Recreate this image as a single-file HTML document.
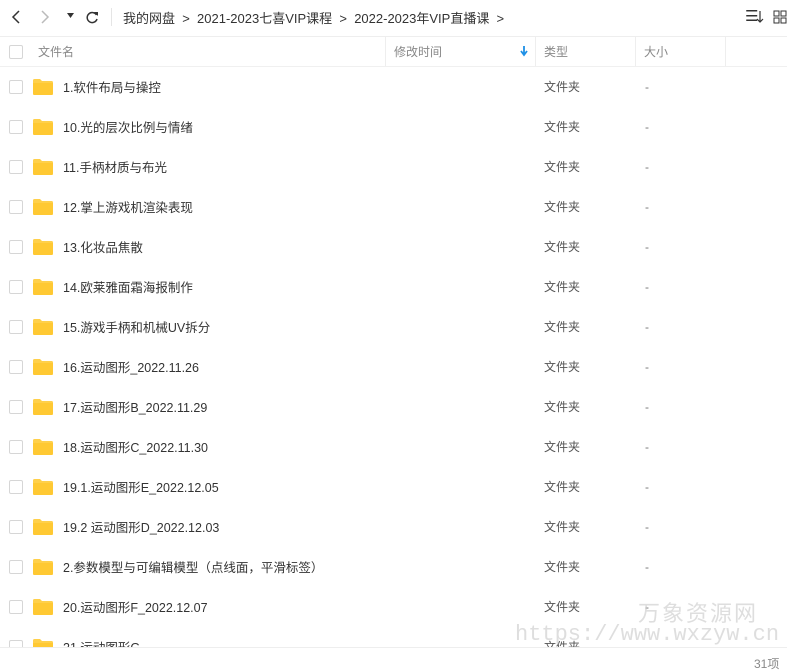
<!DOCTYPE html><html><head><meta charset="utf-8"><style>
body{margin:0;width:787px;height:671px;overflow:hidden;background:#fff;font-family:"Liberation Sans","Noto Sans CJK SC",sans-serif;font-size:12px;color:#333;position:relative}
.a{position:absolute;white-space:nowrap}
.cb{position:absolute;left:9px;width:12px;height:12px;border:1px solid #d6d6d6;border-radius:2px;background:#fff}
.row{position:absolute;left:0;width:787px;height:40px}
.fd{position:absolute;left:33px;top:12px;width:20px;height:16px}
.nm{position:absolute;left:63px;top:10px;font-size:12.5px}
.ty{position:absolute;left:544px;top:11px;color:#555}
.sz{position:absolute;left:645px;top:13px;color:#777}
.hd{color:#888}
</style></head><body>
<svg class="a" style="left:10px;top:9px" width="14" height="16"><path d="M9 2L3 8l6 6" stroke="#333" stroke-width="1.5" fill="none"/></svg>
<svg class="a" style="left:38px;top:9px" width="14" height="16"><path d="M4 2l6 6-6 6" stroke="#bbb" stroke-width="1.5" fill="none"/></svg>
<svg class="a" style="left:67px;top:13px" width="8" height="6"><path d="M0 0h7L3.5 5z" fill="#333"/></svg>
<svg class="a" style="left:84px;top:9px" width="16" height="16"><path d="M12.5 6A5 5 0 1 0 13 10" stroke="#333" stroke-width="1.5" fill="none"/><path d="M10 3l4 0 0 4z" fill="#333"/></svg>
<div class="a" style="left:111px;top:8px;width:1px;height:18px;background:#e5e5e5"></div>
<div class="a" style="left:123px;top:8px;font-size:13px;color:#333">我的网盘 &nbsp;&gt;&nbsp; 2021-2023七喜VIP课程 &nbsp;&gt;&nbsp; 2022-2023年VIP直播课 &nbsp;&gt;</div>
<div class="a" style="left:745px;top:7px;font-size:15px;color:#333">☰</div>
<svg class="a" style="left:756px;top:10px" width="8" height="14"><path d="M4 1v11M1 9l3 3 3-3" stroke="#333" stroke-width="1.2" fill="none"/></svg>
<svg class="a" style="left:773px;top:10px" width="14" height="14"><rect x="1" y="1" width="5" height="5" stroke="#333" fill="none"/><rect x="8" y="1" width="5" height="5" stroke="#333" fill="none"/><rect x="1" y="8" width="5" height="5" stroke="#333" fill="none"/><rect x="8" y="8" width="5" height="5" stroke="#333" fill="none"/></svg>
<div class="a" style="left:0;top:36px;width:787px;height:1px;background:#eee"></div>
<div class="a" style="left:0;top:66px;width:787px;height:1px;background:#f0f0f0"></div>
<div class="cb" style="top:45px"></div>
<div class="a hd" style="left:38px;top:43px">文件名</div>
<div class="a" style="left:385px;top:37px;width:1px;height:29px;background:#eee"></div>
<div class="a hd" style="left:394px;top:43px">修改时间</div>
<svg class="a" style="left:520px;top:45px" width="8" height="12"><path d="M4 1v8M1 6l3 4 3-4" stroke="#1e90e6" stroke-width="1.8" fill="none"/></svg>
<div class="a" style="left:535px;top:37px;width:1px;height:29px;background:#eee"></div>
<div class="a hd" style="left:544px;top:43px">类型</div>
<div class="a" style="left:635px;top:37px;width:1px;height:29px;background:#eee"></div>
<div class="a hd" style="left:644px;top:43px">大小</div>
<div class="a" style="left:725px;top:37px;width:1px;height:29px;background:#eee"></div>
<div id="rows"></div>
<script>
var n=["1.软件布局与操控","10.光的层次比例与情绪","11.手柄材质与布光","12.掌上游戏机渲染表现","13.化妆品焦散","14.欧莱雅面霜海报制作","15.游戏手柄和机械UV拆分","16.运动图形_2022.11.26","17.运动图形B_2022.11.29","18.运动图形C_2022.11.30","19.1.运动图形E_2022.12.05","19.2 运动图形D_2022.12.03","2.参数模型与可编辑模型（点线面，平滑标签）","20.运动图形F_2022.12.07","21.运动图形G"];
var h="";n.forEach(function(t,i){h+='<div class="row" style="top:'+(67+40*i)+'px"><div class="cb" style="top:13px"></div><svg class="fd" viewBox="0 0 20 16"><path d="M0 1.5Q0 0 1.5 0H7l2 2h9.5Q20 2 20 3.5V14.5Q20 16 18.5 16H1.5Q0 16 0 14.5z" fill="#ffd04b"/><path d="M0 4H20V14.5Q20 16 18.5 16H1.5Q0 16 0 14.5z" fill="#ffc933"/></svg><div class="nm">'+t+'</div><div class="ty">文件夹</div><div class="sz">-</div></div>'});
document.getElementById("rows").innerHTML=h;
</script>
<div class="a" style="left:0;top:647px;width:787px;height:24px;background:#fff;border-top:1px solid #eee"></div>
<div class="a" style="left:754px;top:655px;color:#888">31项</div>
<div class="a" style="left:638px;top:596px;font-size:22px;color:rgba(200,200,200,.6);letter-spacing:2px">万象资源网</div>
<div class="a" style="left:515px;top:622px;font-size:22px;font-family:'Liberation Mono',monospace;color:rgba(200,200,200,.6)">https://www.wxzyw.cn</div>
</body></html>
